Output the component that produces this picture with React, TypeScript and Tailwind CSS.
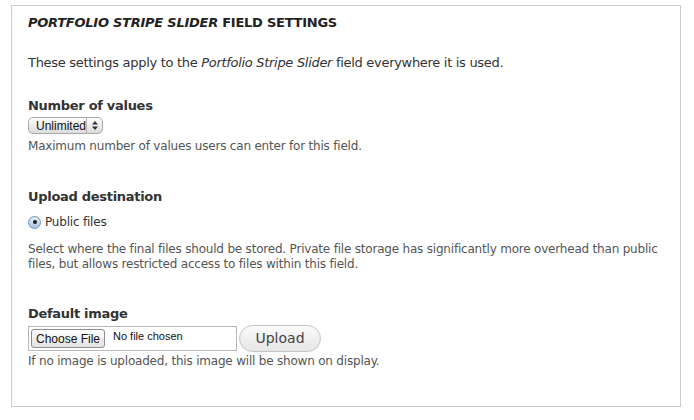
import React from 'react';

const font = { fontFamily: '"DejaVu Sans", Verdana, sans-serif' };

function SelectBox() {
  return (
    <div className="flex h-[17px] w-[75px] items-center rounded-[5px] border border-[#a9a9a9] bg-gradient-to-b from-[#fdfdfd] to-[#dcdcdc] text-[12px] text-[#111]" style={{ fontFamily: '"Liberation Sans", Arial, sans-serif' }}>
      <span className="flex-1 pl-[7px]">Unlimited</span>
      <span className="flex h-full w-[16px] items-center justify-center border-l border-[#b5b5b5]">
        <svg width="6" height="9" viewBox="0 0 6 9">
          <path d="M3 0L6 3.5H0Z M3 9L0 5.5H6Z" fill="#333" />
        </svg>
      </span>
    </div>
  );
}

export default function App() {
  return (
    <div className="min-h-screen bg-white px-[11px] pt-[5px]" style={font}>
      <fieldset className="h-[402px] w-[670px] border border-[#cccccc] px-[16px] pt-[7px] text-[#333]">
        <h2 className="text-[13px] font-bold leading-[20px] tracking-[-0.25px] text-[#222]">
          <em>PORTFOLIO STRIPE SLIDER</em> FIELD SETTINGS
        </h2>

        <p className="mt-[20px] text-[13px] leading-[20px] tracking-[-0.3px]">
          These settings apply to the <em>Portfolio Stripe Slider</em> field everywhere it is used.
        </p>

        <div className="mt-[24px]">
          <label className="block text-[13px] font-bold leading-[18px] tracking-[-0.3px]">Number of values</label>
          <div className="mt-[2px]">
            <SelectBox />
          </div>
          <p className="mt-[4px] text-[12px] leading-[16px] tracking-[-0.2px] text-[#555]">
            Maximum number of values users can enter for this field.
          </p>
        </div>

        <div className="mt-[34px]">
          <label className="block text-[13px] font-bold leading-[18px] tracking-[-0.3px]">Upload destination</label>
          <div className="mt-[8px] flex items-center gap-[4px]">
            <span className="flex h-[13px] w-[13px] items-center justify-center rounded-full border border-[#6f8fb8] bg-gradient-to-b from-[#e3edf8] to-[#a9c3e3]">
              <span className="h-[4px] w-[4px] rounded-full bg-[#1c1c1c]" />
            </span>
            <span className="text-[12px] leading-[16px] tracking-[-0.2px]">Public files</span>
          </div>
          <p className="mt-[12px] text-[12px] leading-[15px] tracking-[-0.2px] text-[#555]">
            Select where the final files should be stored. Private file storage has significantly more overhead than public
            files, but allows restricted access to files within this field.
          </p>
        </div>

        <div className="mt-[33px]">
          <label className="block text-[13px] font-bold leading-[18px] tracking-[-0.3px]">Default image</label>
          <div className="mt-[2px] flex items-center">
            <div className="flex h-[25px] w-[209px] items-center border border-[#b8b8b8] bg-white pl-[2px]" style={{ fontFamily: '"Liberation Sans", Arial, sans-serif' }}>
              <span className="flex h-[19px] w-[74px] items-center justify-center rounded-[3px] border border-[#8e8e8e] bg-gradient-to-b from-[#ffffff] to-[#e2e2e2] text-[12px] text-[#111]">
                Choose File
              </span>
              <span className="ml-[8px] self-start pt-[1px] text-[11px] text-[#111]">No file chosen</span>
            </div>
            <button className="ml-[2px] h-[27px] w-[82px] rounded-full border border-[#c4c4c4] bg-gradient-to-b from-[#fafafa] to-[#e6e6e6] text-[14px] text-[#444]">
              Upload
            </button>
          </div>
          <p className="mt-[1px] text-[12px] leading-[16px] tracking-[-0.2px] text-[#555]">
            If no image is uploaded, this image will be shown on display.
          </p>
        </div>
      </fieldset>
    </div>
  );
}
